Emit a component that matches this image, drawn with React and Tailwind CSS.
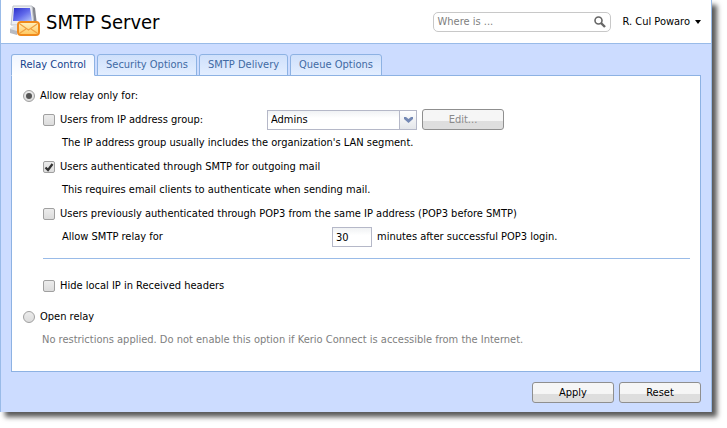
import { useState } from "react";

const TABS = ["Relay Control", "Security Options", "SMTP Delivery", "Queue Options"];

const MailServerIcon = () => (
  <svg width="32" height="34" viewBox="0 0 32 34" className="shrink-0" aria-hidden="true">
    <defs>
      <linearGradient id="screen" x1="0" y1="0" x2="1" y2="1">
        <stop offset="0" stopColor="#2a2ec8" />
        <stop offset="0.5" stopColor="#5f68ea" />
        <stop offset="1" stopColor="#b4c6fd" />
      </linearGradient>
      <linearGradient id="mail" x1="0" y1="0" x2="0" y2="1">
        <stop offset="0" stopColor="#fff2c0" />
        <stop offset="1" stopColor="#ffc65c" />
      </linearGradient>
    </defs>
    <path d="M23 1l3 2 2 17-4 1z" fill="#85878f" />
    <path d="M4 1h19l2 19H2z" fill="#eceef2" stroke="#bfc2c9" strokeWidth="1" />
    <path d="M5 3h16l2 13H4z" fill="url(#screen)" />
    <path d="M1 23l4-2h16v7l-5 1-15-3z" fill="#dfe1e6" />
    <path d="M1 24l7 2v4l-7-2z" fill="#b7bac1" />
    <rect x="9" y="17" width="21" height="13" rx="3" fill="url(#mail)" stroke="#f08a1c" strokeWidth="2" />
    <path d="M11 19l8.500 6 8.500-6M11 28l6-4M28 28l-6-4" fill="none" stroke="#f0a040" strokeWidth="1.2" />
  </svg>
);

const Check = ({ label, defaultChecked = false }) => (
  <label className="flex items-center gap-[5px]">
    <span className="relative flex">
      <input
        type="checkbox"
        defaultChecked={defaultChecked}
        className="peer size-3 appearance-none rounded-[2px] border border-[#a0a0a0] bg-linear-to-b from-[#ececec] to-[#dcdcdc]"
      />
      <svg
        className="pointer-events-none absolute inset-0 hidden peer-checked:block"
        width="12"
        height="12"
        viewBox="0 0 12 12"
      >
        <path d="M2.5 6.5l2.500 2.500 4.500-6" fill="none" stroke="#333" strokeWidth="2.2" />
      </svg>
    </span>
    {label}
  </label>
);

const Radio = ({ label, value, selected, onSelect }) => (
  <label className="flex items-center gap-[5px]">
    <span className="relative flex">
      <input
        type="radio"
        name="relay"
        checked={selected === value}
        onChange={() => onSelect(value)}
        className="peer size-3 appearance-none rounded-full border border-[#a0a0a0] bg-linear-to-b from-[#ececec] to-[#dcdcdc]"
      />
      <span className="pointer-events-none absolute inset-[3px] hidden rounded-full bg-[#555] peer-checked:block" />
    </span>
    {label}
  </label>
);

const Button = ({ children, disabled = false }) => (
  <button
    type="button"
    disabled={disabled}
    className="h-[21px] w-[82px] rounded-[3px] border border-[#8f8f8f] bg-linear-to-b from-[#f6f6f6] from-55% to-[#dedede] to-60% text-black disabled:text-[#8a8a8a]"
  >
    {children}
  </button>
);

export default function App() {
  const [tab, setTab] = useState("Relay Control");
  const [relay, setRelay] = useState("limited");

  return (
    <div className="pr-[15px] pb-4 font-['DejaVu_Sans_Condensed','DejaVu_Sans',sans-serif] text-[11px]/[18px] text-black">
      <div className="border-r border-l border-[#99bbe8] bg-[#ccdcff] shadow-[5px_5px_5px_rgba(0,0,0,0.65)]">
        {/* header */}
        <header className="flex h-11 items-center border-b border-[#99bbe8] bg-white pr-[10px] pl-2">
          <MailServerIcon />
          <h1 className="ml-[5px] grow text-[20px]">SMTP Server</h1>
          <div className="flex h-5 w-[178px] items-center rounded-[5px] border border-[#c8c8c8] pr-1 pl-[3px]">
            <input
              type="search"
              aria-label="Search"
              placeholder="Where is ..."
              className="w-full min-w-0 outline-none placeholder:text-[#808080]"
            />
            <svg width="12" height="12" viewBox="0 0 12 12" className="shrink-0">
              <circle cx="4.5" cy="4.5" r="3.5" fill="none" stroke="#666" strokeWidth="1.6" />
              <path d="M7 7l4 4" stroke="#666" strokeWidth="2.4" />
            </svg>
          </div>
          <button type="button" className="ml-[11px] flex items-center gap-[5px]">
            R. Cul Powaro
            <svg width="6" height="4" viewBox="0 0 6 4">
              <path d="M0 0h6L3 4z" fill="#000" />
            </svg>
          </button>
        </header>

        <main className="px-[10px] pt-[10px]">
          <div role="tablist" className="flex gap-[2px]">
            {TABS.map((name) => (
              <button
                key={name}
                type="button"
                role="tab"
                aria-selected={tab === name}
                onClick={() => setTab(name)}
                className="relative z-10 -mb-px h-[22px] rounded-t-[3px] border border-[#8db2e3] bg-linear-to-b from-[#cfe0fb] to-[#e3eeff] px-2 text-[#416aa3] aria-selected:border-b-white aria-selected:from-[#f0f6ff] aria-selected:to-white aria-selected:text-[#15428b]"
              >
                {name}
              </button>
            ))}
          </div>

          <section className="border border-[#8db2e3] bg-white pr-[10px] pl-[11px] pt-2 pb-[19px]">
            <div className="flex h-6 items-center">
              <Radio label="Allow relay only for:" value="limited" selected={relay} onSelect={setRelay} />
            </div>

            <div className="pl-5">
              <div className="flex h-[23px] items-center">
                <div className="w-[224px]">
                  <Check label="Users from IP address group:" />
                </div>
                <div className="relative w-[150px]">
                  <select
                    aria-label="IP address group"
                    className="block h-5 w-full appearance-none border border-[#b5b8c8] bg-linear-to-b from-[#f0f2f4] to-white to-40% px-[3px]"
                  >
                    <option>Admins</option>
                  </select>
                  <span className="pointer-events-none absolute inset-y-0 right-0 flex w-[18px] items-center justify-center border border-[#b5b8c8] bg-linear-to-b from-white to-[#e4e6ea]">
                    <svg width="9" height="6" viewBox="0 0 9 6">
                      <path d="M0 0h2l2.500 2L7 0h2v2L4.500 6 0 2z" fill="#7488b4" />
                    </svg>
                  </span>
                </div>
                <div className="ml-[5px] flex">
                  <Button disabled>Edit...</Button>
                </div>
              </div>
              <p className="flex h-6 items-center pl-[19px]">
                The IP address group usually includes the organization's LAN segment.
              </p>

              <div className="flex h-[23px] items-center">
                <Check label="Users authenticated through SMTP for outgoing mail" defaultChecked />
              </div>
              <p className="flex h-6 items-center pl-[19px]">
                This requires email clients to authenticate when sending mail.
              </p>

              <div className="flex h-[23px] items-center">
                <Check label="Users previously authenticated through POP3 from the same IP address (POP3 before SMTP)" />
              </div>
              <div className="flex h-6 items-center pl-[19px]">
                <label htmlFor="minutes" className="w-[270px]">
                  Allow SMTP relay for
                </label>
                <input
                  id="minutes"
                  defaultValue="30"
                  className="mr-[5px] h-5 w-10 border border-[#b5b8c8] bg-linear-to-b from-[#f0f2f4] to-white to-40% px-[3px]"
                />
                minutes after successful POP3 login.
              </div>

              <hr className="mt-[9px] mb-[15px] border-[#99bbe8]" />

              <div className="flex h-[23px] items-center">
                <Check label="Hide local IP in Received headers" />
              </div>
            </div>

            <div className="mt-2 flex h-[23px] items-center">
              <Radio label="Open relay" value="open" selected={relay} onSelect={setRelay} />
            </div>
            <p className="flex h-6 items-center pl-[19px] text-[#808080]">
              No restrictions applied. Do not enable this option if Kerio Connect is accessible from the Internet.
            </p>
          </section>
        </main>

        {/* actions */}
        <footer className="flex justify-end gap-[5px] px-[10px] pt-[10px] pb-[9px]">
          <Button>Apply</Button>
          <Button>Reset</Button>
        </footer>
      </div>
    </div>
  );
}
